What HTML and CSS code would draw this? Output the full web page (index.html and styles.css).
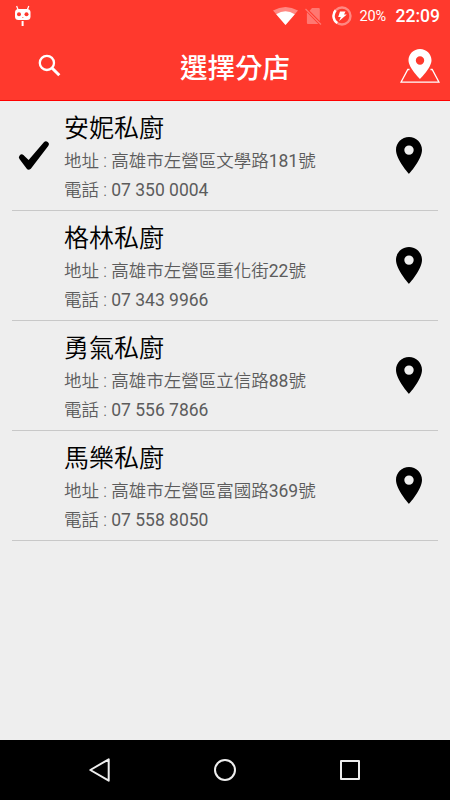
FILE: index.html
```html
<!DOCTYPE html>
<html lang="zh-Hant">
<head>
	<meta charset="UTF-8">
	<title>選擇分店</title>
	<link rel="stylesheet" href="styles.css">
</head>
<body>

<svg class="defs" width="0" height="0">
	<symbol id="pin" viewBox="0 0 26 37">
		<path fill-rule="evenodd" d="M13 0C5.8 0 0 5.8 0 13c0 9.600 13 24 13 24s13-14.400 13-24C26 5.800 20.200 0 13 0zm0 8.400a4.700 4.700 0 1 1 0 9.400a4.700 4.700 0 0 1 0-9.400z"/>
	</symbol>
</svg>

<header class="top">
	<div class="status-bar">
		<svg class="cid" width="18" height="22" viewBox="0 0 18 22">
			<path d="M2.600 1 4.200 5M14.800 1 13.200 5" stroke="#fff" stroke-width="1.200"/>
			<rect x="1" y="4" width="15.500" height="11" rx="3.500" fill="#fff"/>
			<circle cx="5" cy="9.200" r="2" fill="#ff392d"/>
			<circle cx="12.500" cy="9.200" r="2" fill="#ff392d"/>
			<path d="M8 12.500h1.500" stroke="#ff9a94"/>
			<path d="M8.600 16v5" stroke="#fff" stroke-width="2"/>
		</svg>
		<svg class="wifi" width="25" height="18" viewBox="0 0 25 18">
			<path fill="#ff8882" d="M0 3.500Q12.500-3.500 25 3.500L12.500 18z"/>
			<path fill="#fff" d="M3.200 7.200Q12.500 1.200 21.800 7.200L12.500 18z"/>
		</svg>
		<svg class="sim" width="17" height="18" viewBox="0 0 17 18">
			<path fill="#ff7871" d="M7 1h6.800q1 0 1 1v12L4.600 3.700zM1.900 5.200 13.300 17H2.900q-1 0-1-1z"/>
			<path d="M.5 2 16 17.500" stroke="#ff7871" stroke-width="1.300"/>
		</svg>
		<svg class="battery" width="20" height="20" viewBox="0 0 20 20" fill="none">
			<circle cx="10" cy="10" r="8.500" stroke="#ff8882" stroke-width="2.400"/>
			<path d="M5.300 17.100A8.500 8.500 0 0 1 3.600 4.400" stroke="#fff" stroke-width="2.400"/>
			<path fill="#fff" d="M8 5.500h5.500L12 8.500h2.800L7.200 15l1.600-4H6.200z"/>
		</svg>
		<span class="percent">20%</span>
		<span class="clock">22:09</span>
	</div>
	<div class="title-bar">
		<svg class="search" width="24" height="24" viewBox="0 0 24 24" fill="none" stroke="#fff">
			<circle cx="8.900" cy="8.900" r="7.100" stroke-width="2.300"/>
			<path d="M14 14l7.300 7.300" stroke-width="3"/>
		</svg>
		<h1>選擇分店</h1>
		<svg class="map" width="40" height="36" viewBox="0 0 40 36">
			<path d="M9.500 21.500H7.800L1 34.200H39L32.200 21.500H30.500" fill="none" stroke="#fff" stroke-width="1.300"/>
			<path fill="#fff" fill-rule="evenodd" d="M20 1C13.600 1 8.500 6 8.500 12.300 8.500 20 20 31 20 31s11.500-11 11.500-18.700C31.500 6 26.400 1 20 1zm0 7.300a4.200 4.200 0 1 1 0 8.400a4.200 4.200 0 0 1 0-8.400z"/>
		</svg>
	</div>
</header>

<main>
	<ul class="shops">
		<li class="shop">
			<div class="mark">
				<svg width="32" height="32" viewBox="0 0 32 32">
					<path d="M3.700 17.300 10.800 26.700 28 4.200 10.800 24z" fill="#000" stroke="#000" stroke-width="5.600" stroke-linecap="round" stroke-linejoin="round"/>
				</svg>
			</div>
			<div class="info">
				<h2>安妮私廚</h2>
				<p>地址 : 高雄市左營區文學路<span class="num">181</span>號</p>
				<p>電話 : <span class="num">07 350 0004</span></p>
			</div>
			<svg class="pin" width="26" height="37"><use href="#pin"/></svg>
		</li>
		<li class="shop">
			<div class="mark"></div>
			<div class="info">
				<h2>格林私廚</h2>
				<p>地址 : 高雄市左營區重化街<span class="num">22</span>號</p>
				<p>電話 : <span class="num">07 343 9966</span></p>
			</div>
			<svg class="pin" width="26" height="37"><use href="#pin"/></svg>
		</li>
		<li class="shop">
			<div class="mark"></div>
			<div class="info">
				<h2>勇氣私廚</h2>
				<p>地址 : 高雄市左營區立信路<span class="num">88</span>號</p>
				<p>電話 : <span class="num">07 556 7866</span></p>
			</div>
			<svg class="pin" width="26" height="37"><use href="#pin"/></svg>
		</li>
		<li class="shop">
			<div class="mark"></div>
			<div class="info">
				<h2>馬樂私廚</h2>
				<p>地址 : 高雄市左營區富國路<span class="num">369</span>號</p>
				<p>電話 : <span class="num">07 558 8050</span></p>
			</div>
			<svg class="pin" width="26" height="37"><use href="#pin"/></svg>
		</li>
	</ul>
</main>

<nav class="nav-bar">
	<svg width="24" height="26" viewBox="0 0 24 26">
		<path d="M20.700 2.300v21.400L2.300 13z"/>
	</svg>
	<svg width="24" height="26" viewBox="0 0 24 26">
		<circle cx="12" cy="13" r="10"/>
	</svg>
	<svg width="24" height="26" viewBox="0 0 24 26">
		<rect x="3" y="4" width="18" height="18"/>
	</svg>
</nav>

</body>
</html>
```
FILE: styles.css
```css
:root {
	--color-bar: #ff392d;
	--color-bg: #eee;
	--color-line: #c8c8c8;
	--color-detail: #5c5c5c;
	font-family: Roboto, "Noto Sans CJK TC", sans-serif;
}
* {
	box-sizing: border-box;
	margin: 0;
	padding: 0;
}
body {
	display: flex;
	flex-direction: column;
	height: 100vh;
	background-color: var(--color-bg);
}
svg {
	display: block;
	flex: none;
}
.defs {
	position: absolute;
}

/* header */
.top {
	height: 101px;
	background-color: var(--color-bar);
	border-bottom: 1px solid #f00;
	color: #fff;
}
.status-bar {
	display: flex;
	align-items: center;
	height: 32px;
	padding: 0 10px 0 14px;
}
.cid {
	margin-right: auto;
}
.sim {
	margin-left: 7px;
}
.battery {
	margin-left: 10px;
}
.percent {
	width: 28px;
	margin-left: 8px;
	font-size: 14.5px;
	letter-spacing: -0.2px;
}
.clock {
	margin-left: 8px;
	font-size: 17.5px;
	font-weight: 500;
}
.title-bar {
	display: grid;
	grid-template-columns: 100px 1fr 80px;
	align-items: center;
	height: 68px;
	padding: 0 10px;
}
.search {
	margin-left: 28px;
}
.title-bar h1 {
	padding-top: 5px;
	font-size: 27.5px;
	font-weight: 500;
	line-height: 40px;
	text-align: center;
}
.map {
	justify-self: end;
}

/* shop list */
main {
	flex: 1;
}
.shops {
	padding: 0 12px;
	list-style: none;
}
.shop {
	display: flex;
	align-items: center;
	height: 110px;
	padding-right: 16px;
	border-bottom: 1px solid var(--color-line);
}
.mark {
	width: 52px;
	padding-left: 6px;
}
.info {
	flex: 1;
	padding-top: 5px;
}
.info h2 {
	font-size: 25px;
	font-weight: 350;
	line-height: 36px;
}
.info p {
	color: var(--color-detail);
	font-size: 17.5px;
	font-weight: 350;
	line-height: 29px;
}
.num {
	font-weight: 400;
}

/* navigation */
.nav-bar {
	display: flex;
	justify-content: center;
	align-items: center;
	gap: 101px;
	height: 60px;
	background-color: #000;
}
.nav-bar svg {
	fill: none;
	stroke: #eee;
	stroke-width: 2;
	stroke-linejoin: round;
}
```
